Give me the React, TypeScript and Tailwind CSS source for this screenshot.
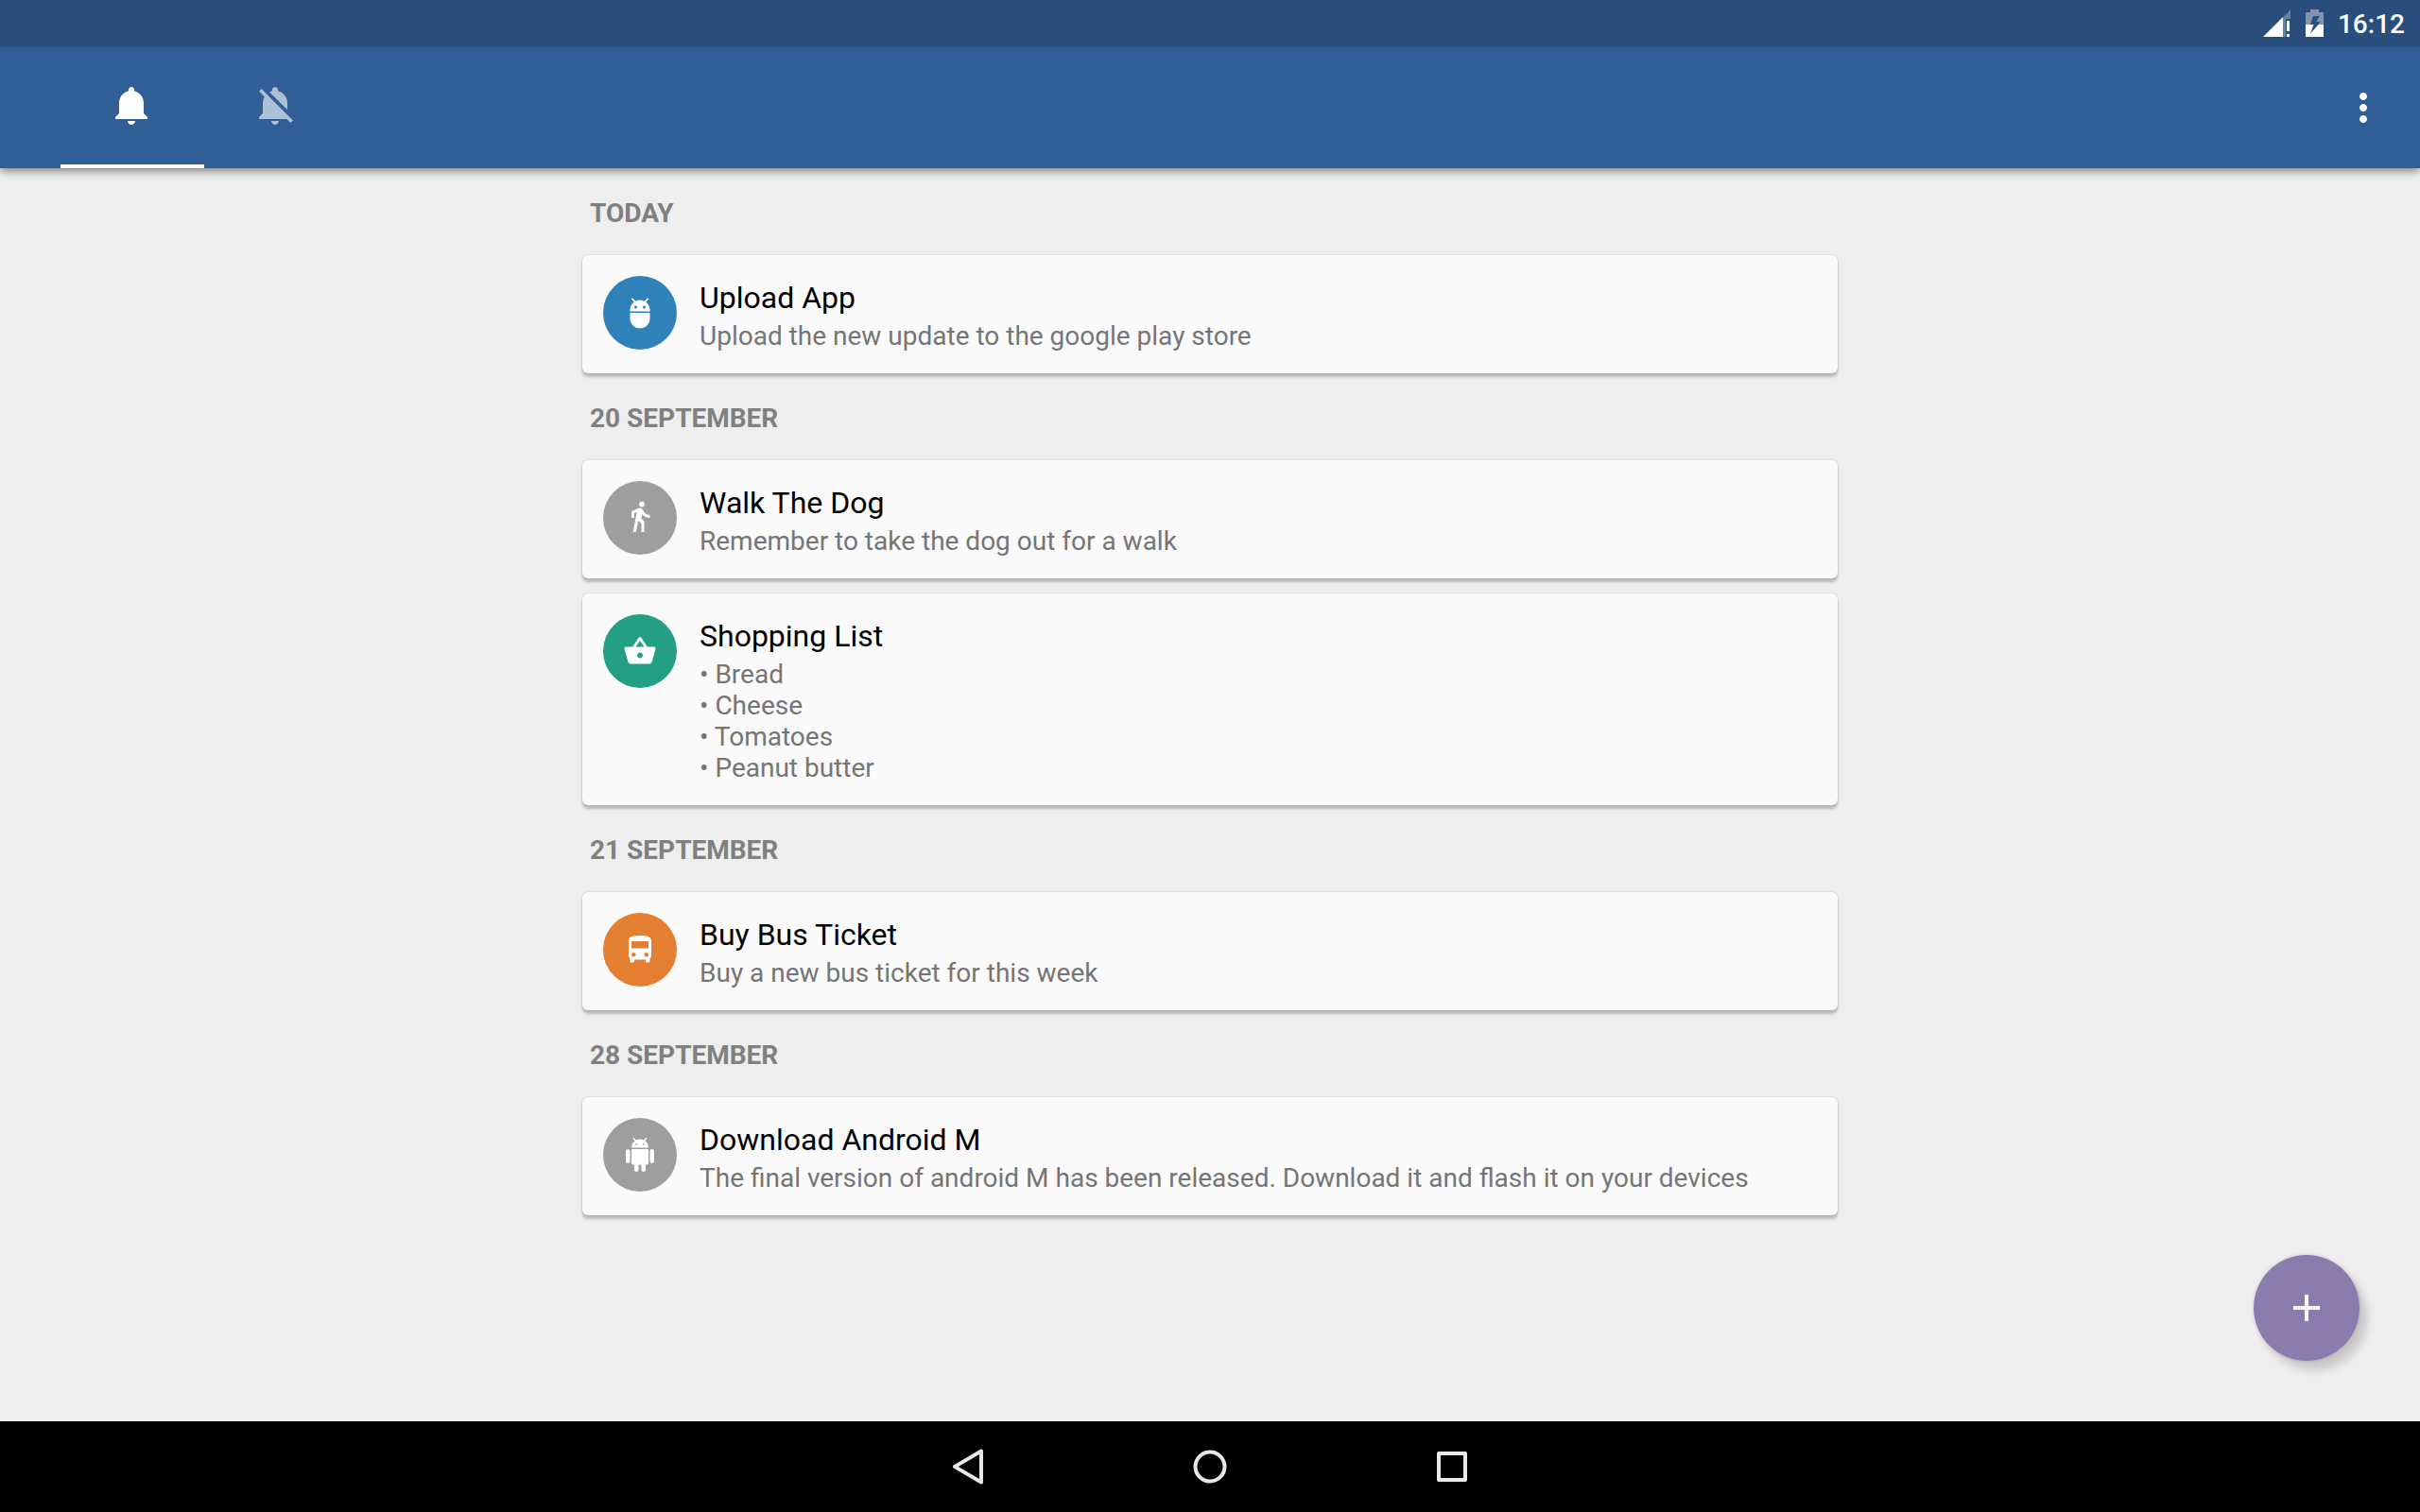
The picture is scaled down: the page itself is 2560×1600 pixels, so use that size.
import type { ReactNode } from "react";
import { MdAdb, MdAdd, MdDirectionsBus, MdMoreVert, MdShoppingBasket } from "react-icons/md";

type Reminder = {
  title: string;
  lines: string[];
  color: string;
  icon: ReactNode;
};

type Group = {
  label: string;
  reminders: Reminder[];
};

function AndroidIcon() {
  return (
    <svg viewBox="0 0 24 24" className="size-9" fill="currentColor">
      <path d="M6 18c0 .55.45 1 1 1h1v3.5c0 .83.67 1.5 1.5 1.5s1.5-.67 1.5-1.5V19h2v3.5c0 .83.67 1.5 1.5 1.5s1.5-.67 1.5-1.5V19h1c.55 0 1-.45 1-1V8H6v10zM3.5 8C2.67 8 2 8.67 2 9.5v7c0 .83.67 1.5 1.5 1.5S5 17.33 5 16.5v-7C5 8.67 4.33 8 3.5 8zm17 0c-.83 0-1.5.67-1.5 1.5v7c0 .83.67 1.5 1.5 1.5s1.5-.67 1.5-1.5v-7c0-.83-.67-1.5-1.5-1.5zm-4.97-5.84l1.3-1.3c.2-.2.2-.51 0-.71-.2-.2-.51-.2-.71 0l-1.48 1.48C13.85 1.23 12.95 1 12 1c-.96 0-1.86.23-2.66.63L7.85.15c-.2-.2-.51-.2-.71 0-.2.2-.2.51 0 .71l1.31 1.31C6.97 3.26 6 5.01 6 7h12c0-1.99-.97-3.75-2.47-4.84zM10 5H9V4h1v1zm5 0h-1V4h1v1z" />
    </svg>
  );
}

function WalkIcon() {
  return (
    <svg viewBox="0 1 24 24" className="size-9" fill="currentColor">
      <circle cx="13.300" cy="3.400" r="1.900" />
      <path d="M9.800 8.900L7 23h2.100l1.800-8 2.100 2v6h2v-7.500l-2.100-2 .6-3C14.800 12 16.800 13 19 13v-2c-1.900 0-3.500-1-4.300-2.400l-1-1.600c-.4-.6-1-1-1.700-1-.3 0-.5.1-.8.1L6 8.300V13h2V9.600l1.800-.7" />
    </svg>
  );
}

const groups: Group[] = [
  {
    label: "TODAY",
    reminders: [
      {
        title: "Upload App",
        lines: ["Upload the new update to the google play store"],
        color: "bg-[#2f81b9]",
        icon: <MdAdb className="size-9" />,
      },
    ],
  },
  {
    label: "20 SEPTEMBER",
    reminders: [
      {
        title: "Walk The Dog",
        lines: ["Remember to take the dog out for a walk"],
        color: "bg-[#9e9e9e]",
        icon: <WalkIcon />,
      },
      {
        title: "Shopping List",
        lines: ["• Bread", "• Cheese", "• Tomatoes", "• Peanut butter"],
        color: "bg-[#239f85]",
        icon: <MdShoppingBasket className="size-9" />,
      },
    ],
  },
  {
    label: "21 SEPTEMBER",
    reminders: [
      {
        title: "Buy Bus Ticket",
        lines: ["Buy a new bus ticket for this week"],
        color: "bg-[#e47f31]",
        icon: <MdDirectionsBus className="size-9" />,
      },
    ],
  },
  {
    label: "28 SEPTEMBER",
    reminders: [
      {
        title: "Download Android M",
        lines: ["The final version of android M has been released. Download it and flash it on your devices"],
        color: "bg-[#9e9e9e]",
        icon: <AndroidIcon />,
      },
    ],
  },
];

function StatusBar() {
  return (
    <div className="relative z-20 flex h-[50px] shrink-0 items-center justify-end bg-[#294e7c] pr-4 text-white">
      <svg viewBox="0 0 30 30" className="mr-[15px] size-[30px]">
        <path d="M21 8.500 29 .5V10h-5v19h-3z" fill="#fff" fillOpacity=".3" />
        <path d="M0 29 21 8v21z" fill="#fff" />
        <path d="M25 12h3v11h-3zM25 26h3v3h-3z" fill="#fff" />
      </svg>
      <svg viewBox="0 0 20 30" className="mr-[14px] h-[30px] w-5">
        <path d="M0 3h5V0h9v3h5v13h-5.500L15 13h-4l4-6H8L5 16H0z" fill="#fff" fillOpacity=".4" />
        <path d="M0 16h8.500L5 25.500 13.500 16H19v13H0z" fill="#fff" />
      </svg>
      <span className="pt-0.5 text-[28px] leading-8 font-medium">16:12</span>
    </div>
  );
}

function Toolbar() {
  return (
    <header className="relative z-10 flex h-32 shrink-0 items-stretch bg-[#315e96] pl-16 text-white shadow-[0_3px_8px_rgba(0,0,0,0.4),0_6px_12px_rgba(0,0,0,0.06)]">
      <button aria-label="Active reminders" className="flex w-[152px] items-center justify-center border-b-4 border-white">
        <svg viewBox="0 0 24 24" className="size-12" fill="currentColor">
          <path d="M11.5 22c1.100 0 2-.9 2-2h-4c0 1.100.9 2 2 2zm6.500-6v-5.500c0-3.070-2.130-5.640-5-6.320V3.500c0-.83-.67-1.500-1.500-1.500S10 2.670 10 3.500v.68c-2.870.68-5 3.250-5 6.320V16l-2 2v1h17v-1l-2-2z" />
        </svg>
      </button>
      <button aria-label="Past reminders" className="flex w-[152px] items-center justify-center border-b-4 border-transparent text-[#adbfd5]">
        <svg viewBox="0 0 24 24" className="size-12" fill="currentColor">
          <path d="M11.5 22c1.100 0 2-.9 2-2h-4c0 1.100.89 2 2 2zM18 10.500c0-3.070-2.130-5.640-5-6.320V3.500c0-.83-.67-1.500-1.500-1.500S10 2.670 10 3.500v.68c-.51.12-.99.32-1.450.56L18 14.180V10.500zm-.27 8.500l2 2L21 19.730 4.270 3 3 4.270l2.920 2.920C5.340 8.160 5 9.290 5 10.500V16l-2 2v1h14.730z" />
        </svg>
      </button>
      <button aria-label="More options" className="mr-3 ml-auto flex w-24 items-center justify-center">
        <MdMoreVert className="size-12" />
      </button>
    </header>
  );
}

function ReminderCard({ reminder }: { reminder: Reminder }) {
  return (
    <article className="flex gap-6 rounded-md bg-[#fafafa] px-[22px] pt-[22px] pb-[23px] shadow-[0_4px_3px_rgba(0,0,0,0.22),0_0_2px_rgba(0,0,0,0.2)]">
      <div className={`flex size-[78px] shrink-0 items-center justify-center rounded-full text-white ${reminder.color}`}>
        {reminder.icon}
      </div>
      <div className="pt-1">
        <h3 className="mb-[5px] text-[32px] leading-[38px] text-black">{reminder.title}</h3>
        {reminder.lines.map((line) => (
          <p key={line} className="text-[28px] leading-[33px] text-[#757575]">{line}</p>
        ))}
      </div>
    </article>
  );
}

function NavigationBar() {
  return (
    <nav className="flex h-24 shrink-0 items-center justify-center bg-black text-[#e8e8e8]">
      <button aria-label="Back" className="flex h-24 w-64 items-center justify-center">
        <svg viewBox="0 0 40 40" className="size-10" fill="none" stroke="currentColor" strokeWidth="4" strokeLinejoin="round">
          <path d="M34 3.500v33L6 20z" />
        </svg>
      </button>
      <button aria-label="Home" className="flex h-24 w-64 items-center justify-center">
        <svg viewBox="0 0 40 40" className="size-10" fill="none" stroke="currentColor" strokeWidth="4">
          <circle cx="20" cy="20" r="15.500" />
        </svg>
      </button>
      <button aria-label="Recent apps" className="flex h-24 w-64 items-center justify-center">
        <svg viewBox="0 0 40 40" className="size-10" fill="none" stroke="currentColor" strokeWidth="4" strokeLinejoin="round">
          <path d="M6 6h28v28H6z" />
        </svg>
      </button>
    </nav>
  );
}

export default function App() {
  return (
    <div className="flex h-screen flex-col bg-[#eeeeee] font-['Roboto',sans-serif]">
      <StatusBar />
      <Toolbar />
      <div className="relative flex min-h-0 flex-1 flex-col">
        <main className="flex-1 overflow-y-auto">
          <div className="mx-auto max-w-[1328px]">
            {groups.map((group) => (
              <section key={group.label}>
                <h2 className="px-2 pt-[31px] pb-[27px] text-[28px] leading-[34px] font-bold text-[#808080]">{group.label}</h2>
                <div className="flex flex-col gap-4">
                  {group.reminders.map((reminder) => (
                    <ReminderCard key={reminder.title} reminder={reminder} />
                  ))}
                </div>
              </section>
            ))}
          </div>
        </main>
        <button
          aria-label="Add reminder"
          className="absolute right-16 bottom-16 flex size-28 items-center justify-center rounded-full bg-[#8a7dae] text-white shadow-[8px_10px_10px_rgba(0,0,0,0.16),0_0_4px_rgba(0,0,0,0.15)]"
        >
          <MdAdd className="size-12" />
        </button>
      </div>
      <NavigationBar />
    </div>
  );
}
